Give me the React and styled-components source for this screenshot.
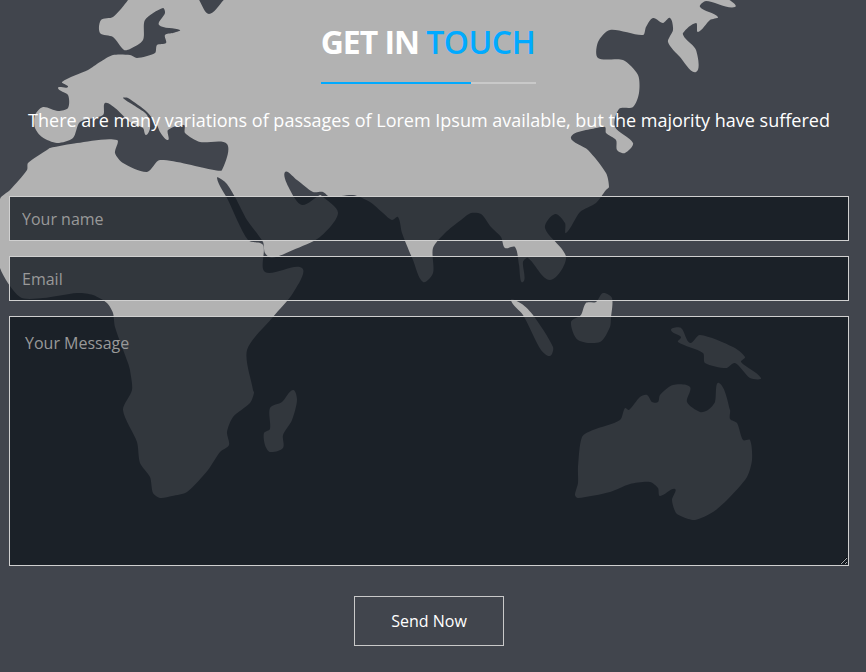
import React from 'react'
import styled, { createGlobalStyle } from 'styled-components'

const GlobalStyle = createGlobalStyle`
  html, body {
    margin: 0;
    padding: 0;
    background: #41454d;
  }
  * {
    box-sizing: border-box;
  }
`

const Section = styled.section`
  position: relative;
  width: 866px;
  height: 672px;
  overflow: hidden;
  padding: 20px 17px 0 9px;
  background: #41454d;
  font-family: "Open Sans", "Liberation Sans", sans-serif;
`

const WorldMap = styled.svg`
  position: absolute;
  top: 0;
  left: 0;
`

const Content = styled.div`
  position: relative;
`

const Title = styled.h2`
  margin: 0;
  padding-right: 2px;
  font-size: 32px;
  line-height: 44px;
  font-weight: 700;
  letter-spacing: -1.05px;
  text-align: center;
  color: #fff;
  span {
    color: #00aaff;
    font-weight: 600;
    letter-spacing: -0.45px;
  }
`

const Underline = styled.div`
  display: flex;
  width: 215px;
  height: 2px;
  margin: 18px 0 0 312px;
  background: #c9c9c9;
`

const UnderlineFill = styled.div`
  width: 150px;
  background: #00aaff;
`

const Lead = styled.p`
  margin: 23px 0 0;
  font-size: 18px;
  line-height: 26px;
  text-align: center;
  color: #fff;
`

const Form = styled.form`
  display: flex;
  flex-direction: column;
  gap: 15px;
  margin-top: 63px;
`

const fieldStyles = `
  display: block;
  width: 840px;
  border: 1px solid #d0d0d0;
  background: rgba(17, 24, 31, 0.8);
  color: #fff;
  font-family: "Open Sans", "Liberation Sans", sans-serif;
  font-size: 16px;
  outline: none;
  &::placeholder {
    color: #999;
    opacity: 1;
  }
`

const Input = styled.input`
  ${fieldStyles}
  height: 45px;
  padding: 0 12px;
`

const Message = styled.textarea`
  ${fieldStyles}
  height: 250px;
  padding: 14px 15px;
  line-height: 24px;
`

const Actions = styled.div`
  display: flex;
  justify-content: center;
  margin-top: 15px;
`

const SendButton = styled.button`
  width: 150px;
  height: 50px;
  border: 1px solid #c9c9c9;
  background: transparent;
  color: #fff;
  font-family: "Open Sans", "Liberation Sans", sans-serif;
  font-size: 16px;
  cursor: pointer;
`

const eurasiaAfrica = `
  230,-4 209,14 195,-4 128,-4 128,0 113,17 101,20 100,33 113,37 124,50 130,49 143,40 145,20 163,8 165,13 159,25 180,30
  173,33 165,35 166,43 157,45 155,53 137,58 130,55 113,55 100,62 88,70 62,82 68,87 58,88 68,95 68,108 58,111
  43,107 35,115 35,128 42,137 57,143 73,138 80,122 103,115 105,103 115,108 130,122 143,128 146,135 150,128
  147,115 135,106 123,98 128,98 147,112 157,125 160,132 168,140 168,130 184,125 185,133 200,142 227,144 222,170
  214,170 160,160 147,172 123,163 115,153 117,140 77,143 50,148 47,150 28,163 27,170 10,190 0,199 -2,235 0,268
  20,297 43,298 77,293 93,295 107,303 113,313 115,327 128,363 130,370 132,390 123,410 137,442 140,463 150,477
  153,493 160,498 172,496 187,492 208,470 220,452 229,445 227,432 233,417 250,403 254,393 253,390 247,350 273,317
  293,293 302,268 265,272 263,245 248,240 228,200 217,178 226,183 235,197 247,220 263,242 265,253 272,258 293,250
  320,237 338,213 322,196 320,195 302,205 290,190 285,172 297,180 313,192 323,192 330,197 353,195 370,202 383,213
  392,220 398,217 402,233 413,260 423,282 433,273 433,248 445,233 461,220 471,213 481,214 491,227 501,237 505,248
  515,247 519,265 523,282 523,262 528,258 550,280 566,257 545,228 555,214 565,223 566,233 580,212 596,203 606,190
  609,187 606,173 588,150 571,137 596,128 605,127 606,133 616,140 617,150 625,153 633,143 615,127 619,109 633,107
  639,93 638,75 623,60 598,58 598,42 610,30 643,35 646,27 653,18 663,23 670,18 673,30 668,42 680,57 696,72 696,50
  685,38 683,33 696,23 698,32 710,20 718,17 700,7 706,1 735,7 720,-4
`

const madagascar = '293,390 297,400 292,420 283,435 283,448 270,452 265,445 264,433 270,429 270,408 282,402'
const sumatra = '511,300 522,304 533,315 553,347 550,356 541,350 523,315'
const borneo = '603,293 612,298 611,318 610,327 600,342 578,340 571,322 581,315 586,303 596,302'
const newGuinea = '671,330 681,328 690,343 700,335 733,347 745,357 741,362 761,378 750,378 735,363 726,368 705,363 703,353 678,342 681,337'
const australia = `
  719,383 730,410 730,419 737,423 743,440 750,440 752,460 747,477 727,500 713,512 695,520 683,517 676,513 672,500
  675,489 660,496 658,488 650,482 630,484 610,492 578,498 575,495 578,483 578,467 582,437 593,430 620,420 625,408
  629,410 640,397 647,395 652,402 658,402 660,395 673,385 690,387 687,402 700,412 708,410 715,402
`

const lands = [eurasiaAfrica, madagascar, sumatra, borneo, newGuinea, australia]

const tangent = (a, b) => {
  const dx = b[0] - a[0]
  const dy = b[1] - a[1]
  const len = Math.hypot(dx, dy) || 1
  return [dx / len, dy / len]
}

// rounds the traced coast so it does not look like a polygon
const coastPath = points => {
  const pts = points.trim().split(/\s+/).map(p => p.split(',').map(Number))
  const n = pts.length
  let d = `M${pts[0][0]} ${pts[0][1]}`
  pts.forEach((p1, i) => {
    const p0 = pts[(i - 1 + n) % n]
    const p2 = pts[(i + 1) % n]
    const p3 = pts[(i + 2) % n]
    const reach = Math.hypot(p2[0] - p1[0], p2[1] - p1[1]) * 0.25
    const t1 = tangent(p0, p2)
    const t2 = tangent(p1, p3)
    const c1 = [p1[0] + t1[0] * reach, p1[1] + t1[1] * reach]
    const c2 = [p2[0] - t2[0] * reach, p2[1] - t2[1] * reach]
    d += ` C${c1[0].toFixed(1)} ${c1[1].toFixed(1)} ${c2[0].toFixed(1)} ${c2[1].toFixed(1)} ${p2[0]} ${p2[1]}`
  })
  return d + 'Z'
}

const App = () => (
  <>
    <GlobalStyle />
    <Section>
      <WorldMap width="866" height="672" viewBox="0 0 866 672" aria-hidden="true">
        {lands.map((points, i) => (
          <path key={i} d={coastPath(points)} fill="#b2b2b2" />
        ))}
      </WorldMap>
      <Content>
        <Title>GET IN <span>TOUCH</span></Title>
        <Underline><UnderlineFill /></Underline>
        <Lead>There are many variations of passages of Lorem Ipsum available, but the majority have suffered</Lead>
        <Form onSubmit={e => e.preventDefault()}>
          <Input type="text" placeholder="Your name" />
          <Input type="email" placeholder="Email" />
          <Message placeholder="Your Message" />
          <Actions>
            <SendButton type="submit">Send Now</SendButton>
          </Actions>
        </Form>
      </Content>
    </Section>
  </>
)

export default App
